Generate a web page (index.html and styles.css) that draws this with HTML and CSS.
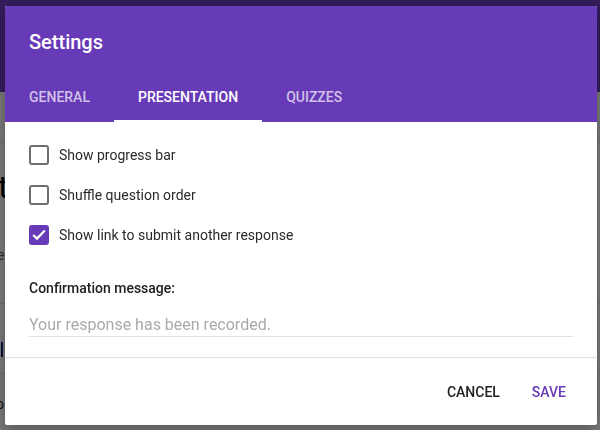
FILE: index.html
```html
<!DOCTYPE html>
<html lang="en">
<head>
  <meta charset="UTF-8">
  <title>Settings</title>
  <meta name="viewport" content="width=device-width, initial-scale=1.0">
  <link rel="stylesheet" href="styles.css">
</head>
<body>
  <!-- Form page underneath the dialog -->
  <div class="page">
    <div class="page-head"></div>
    <div class="page-tabs"></div>
    <div class="page-card">
      <div class="peek-title">t</div>
      <div class="peek-desc">e</div>
    </div>
    <div class="page-question">
      <div class="caret"></div>
    </div>
    <div class="peek-text">o</div>
  </div>

  <div class="scrim"></div>

  <div class="dialog">
    <div class="dialog-head">
      <div class="dialog-title">Settings</div>
      <div class="tabs">
        <div class="tab">GENERAL</div>
        <div class="tab active">PRESENTATION</div>
        <div class="tab">QUIZZES</div>
      </div>
    </div>

    <div class="dialog-body">
      <label class="option">
        <span class="box"></span>
        <span>Show progress bar</span>
      </label>
      <label class="option">
        <span class="box"></span>
        <span>Shuffle question order</span>
      </label>
      <label class="option">
        <span class="box checked">
          <svg width="20" height="20" viewBox="0 0 20 20"><path d="M4.2 10l3.8 3.6L15.8 5.6" fill="none" stroke="#fff" stroke-width="2.2"/></svg>
        </span>
        <span>Show link to submit another response</span>
      </label>

      <div class="field-label">Confirmation message:</div>
      <input class="field" type="text" placeholder="Your response has been recorded.">
    </div>

    <div class="dialog-foot">
      <button class="btn">CANCEL</button>
      <button class="btn primary">SAVE</button>
    </div>
  </div>
</body>
</html>
```

FILE: styles.css
```css
body {
  margin: 0;
  font-family: Roboto, 'Liberation Sans', sans-serif;
  background: #f2f2f2;
  overflow: hidden;
}

.page-head {
  height: 92px;
  background: #673ab7;
}

.page-tabs {
  height: 50px;
  background: #f4f4f4;
  border-bottom: 1px solid #dadce0;
}

.page-card {
  height: 160px;
  background: #f6f6f6;
  border-bottom: 1px solid #dadce0;
  overflow: hidden;
}

.peek-title {
  margin: 28px 0 0 -2px;
  font-size: 32px;
  line-height: 32px;
  color: #000;
}

.peek-desc {
  margin: 42px 0 0 -3px;
  font-size: 14px;
  line-height: 20px;
  color: #5f6368;
}

.page-question {
  height: 69px;
  background: #f4f4f4;
  border-bottom: 1px solid #dadce0;
  overflow: hidden;
}

.caret {
  width: 2px;
  height: 15px;
  margin: 38px 0 0 1px;
  background: #1a237e;
}

.peek-text {
  margin: 20px 0 0 -4px;
  font-size: 14px;
  line-height: 20px;
  color: #202124;
}

.scrim {
  position: fixed;
  inset: 0;
  background: rgba(0, 0, 0, 0.5);
}

.dialog {
  position: fixed;
  top: 6px;
  left: 5px;
  width: 592px;
  height: 419px;
  background: #fff;
  border-radius: 2px;
  box-shadow: 0 4px 16px rgba(0, 0, 0, 0.3);
  display: flex;
  flex-direction: column;
  overflow: hidden;
}

.dialog-head {
  background: #673ab7;
  color: #fff;
}

.dialog-title {
  padding: 24px 24px 20px;
  font-size: 20px;
  line-height: 24px;
  font-weight: 500;
}

.tabs {
  display: flex;
  height: 48px;
}

.tab {
  display: flex;
  align-items: center;
  padding: 0 24px 2px;
  font-size: 14px;
  font-weight: 500;
  color: rgba(255, 255, 255, 0.7);
}

.tab.active {
  color: #fff;
  box-shadow: inset 0 -2px 0 #fff;
}

.dialog-body {
  padding: 13px 24px 20px;
  border-bottom: 1px solid #e0e0e0;
}

.option {
  display: flex;
  align-items: center;
  gap: 10px;
  height: 40px;
  font-size: 14px;
  color: #2a2a2a;
}

.box {
  width: 20px;
  height: 20px;
  box-sizing: border-box;
  border: 2px solid #6e6e6e;
  border-radius: 3px;
}

.box.checked {
  border: none;
  background: #673ab7;
}

.box svg {
  display: block;
}

.field-label {
  margin-top: 23px;
  font-size: 14px;
  line-height: 20px;
  font-weight: 500;
  color: #202124;
}

.field {
  display: block;
  width: 100%;
  margin: 14px 0 0;
  padding: 0;
  height: 25px;
  box-sizing: border-box;
  border: none;
  border-bottom: 1px solid #e0e0e0;
  font-family: inherit;
  font-size: 16px;
  line-height: 24px;
  color: #202124;
  outline: none;
}

.field::placeholder {
  color: #aaa;
}

.dialog-foot {
  flex: 1;
  display: flex;
  justify-content: flex-end;
  align-items: center;
  gap: 16px;
  padding-right: 23px;
}

.btn {
  padding: 8px;
  border: none;
  background: none;
  font-family: inherit;
  font-size: 14px;
  font-weight: 500;
  color: #202124;
}

.btn.primary {
  color: #673ab7;
}
```
